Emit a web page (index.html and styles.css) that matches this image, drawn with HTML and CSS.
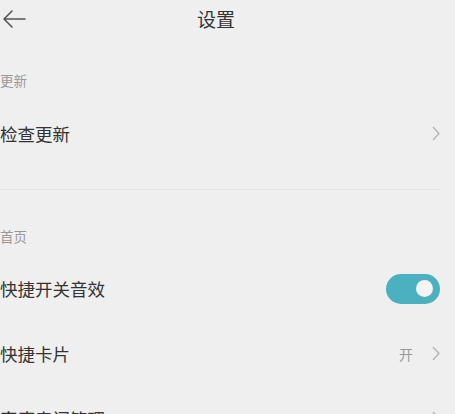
FILE: index.html
```html
<!DOCTYPE html>
<html lang="zh-CN">
<head>
<meta charset="utf-8">
<title>设置</title>
<link rel="stylesheet" href="styles.css">
</head>
<body>
<div class="page">
  <header class="topbar">
    <svg class="back" width="24" height="20" viewBox="0 0 24 20">
      <path d="M23 10H2 M10 2L2 10l8 8" fill="none" stroke="#555" stroke-width="1.6" stroke-linecap="round" stroke-linejoin="round"/>
    </svg>
    <h1 class="title">设置</h1>
  </header>

  <section class="section first">
    <div class="section-label">更新</div>
    <div class="row">
      <span class="row-text">检查更新</span>
      <span class="row-end">
        <svg class="chev" width="8" height="15" viewBox="0 0 8 15"><polyline points="1,1 7,7.5 1,14" fill="none" stroke="#b3b3b3" stroke-width="1.3"/></svg>
      </span>
    </div>
  </section>

  <div class="divider"></div>

  <section class="section">
    <div class="section-label">首页</div>
    <div class="row">
      <span class="row-text">快捷开关音效</span>
      <span class="toggle on"><span class="knob"></span></span>
    </div>
    <div class="row">
      <span class="row-text">快捷卡片</span>
      <span class="row-end">
        <span class="value">开</span>
        <svg class="chev" width="8" height="15" viewBox="0 0 8 15"><polyline points="1,1 7,7.5 1,14" fill="none" stroke="#b3b3b3" stroke-width="1.3"/></svg>
      </span>
    </div>
    <div class="row">
      <span class="row-text">家庭房间管理</span>
      <span class="row-end">
        <svg class="chev" width="8" height="15" viewBox="0 0 8 15"><polyline points="1,1 7,7.5 1,14" fill="none" stroke="#b3b3b3" stroke-width="1.3"/></svg>
      </span>
    </div>
  </section>
</div>
</body>
</html>
```

FILE: styles.css
```css
html, body {
  margin: 0;
  padding: 0;
  background: #efefef;
  height: 100%;
  overflow: hidden;
}

body {
  font-family: "Noto Sans CJK SC", "Noto Sans", sans-serif;
  color: #333;
}

.page {
  width: 455px;
}

.topbar {
  height: 37px;
  display: flex;
  align-items: center;
  padding-left: 2px;
}

.back {
  display: block;
  flex: none;
}

.title {
  margin: 0 0 0 171px;
  font-size: 19px;
  font-weight: normal;
  line-height: 37px;
  color: #333;
}

.section.first {
  margin-top: 33px;
}

.section {
  margin-top: 36px;
}

.section-label {
  height: 20px;
  line-height: 20px;
  font-size: 13.5px;
  color: #999;
  margin-bottom: 10px;
}

.row {
  height: 65px;
  display: flex;
  align-items: center;
  justify-content: space-between;
  padding-right: 15px;
}

.section.first .row {
  height: 66px;
}

.row-text {
  font-size: 17.5px;
  color: #333;
}

.row-end {
  display: flex;
  align-items: center;
  gap: 19px;
}

.value {
  font-size: 14px;
  color: #999;
}

.chev {
  display: block;
}

.divider {
  height: 1px;
  width: 440px;
  background: #e4e4e4;
  margin-top: 23px;
}

.toggle {
  width: 54px;
  height: 30px;
  border-radius: 15px;
  background: #4bb0bf;
  display: flex;
  align-items: center;
  justify-content: flex-end;
  padding-right: 7px;
  box-sizing: border-box;
}

.knob {
  width: 17px;
  height: 17px;
  border-radius: 50%;
  background: #f4f4f4;
}
```
